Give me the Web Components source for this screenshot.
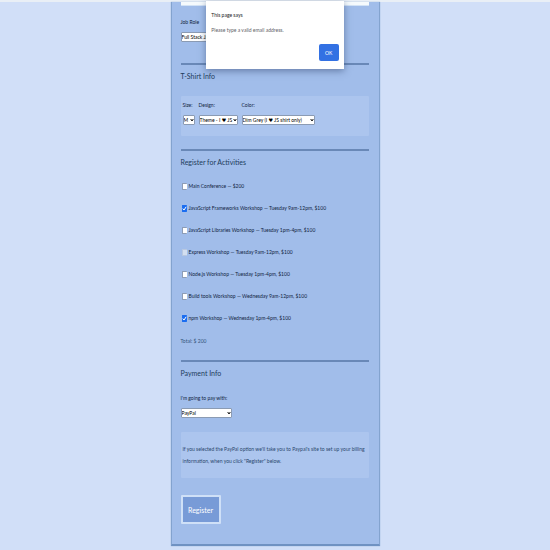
<!DOCTYPE html>
<html lang="en">
<head>
<meta charset="utf-8">
<meta name="viewport" content="width=device-width, initial-scale=1">
<title>Conference registration</title>
<style>
  body { margin: 0; min-height: 100vh; background: #d1dff8; color: #10243f;
    font-family: Lato, "Open Sans", "DejaVu Sans", sans-serif; font-size: 5px; line-height: 12px; }
</style>
</head>
<body>
<register-page></register-page>
<script>
const define = (name, html, setup) => {
  const template = document.createElement('template');
  template.innerHTML = html;
  customElements.define(name, class extends HTMLElement {
    connectedCallback() {
      if (this.shadowRoot) return;
      const root = this.attachShadow({ mode: 'open' });
      root.append(template.content.cloneNode(true));
      if (setup) setup(this, root);
    }
  });
};

define('form-section', `
  <style>
    :host { display: block; }
    :host([ruled]) { border-top: 2px solid #6988b7; }
    h2 { margin: 0; padding: 3px 0 0; font-size: 7px; line-height: 16px; font-weight: 400; color: #1d3c5c; }
  </style>
  <h2></h2><slot></slot>`, (host, root) => {
    const h = root.querySelector('h2');
    if (host.hasAttribute('heading')) h.textContent = host.getAttribute('heading'); else h.remove();
  });

define('select-field', `
  <style>
    :host { display: block; }
    label { display: block; margin-bottom: 4px; }
    .box { display: grid; align-items: center; width: var(--field-width, auto); }
    select { grid-area: 1 / 1; appearance: none; box-sizing: border-box; width: 100%; height: 10px; margin: 0;
      padding: 0 4px 0 0; border: 1px solid #8b9bb3; border-radius: 1px; background: #fff; color: #000;
      font: 5px/8px Lato, "DejaVu Sans", sans-serif; }
    svg { grid-area: 1 / 1; justify-self: end; width: 4px; height: 4px; margin-right: 1px; pointer-events: none; }
  </style>
  <label for="field"></label>
  <span class="box"><select id="field"><option></option></select>
  <svg viewBox="0 0 4 4" fill="none" stroke="#111" stroke-width="1" aria-hidden="true"><path d="M.7 1 2 3 3.3 1"/></svg></span>`,
  (host, root) => {
    root.querySelector('label').textContent = host.getAttribute('label');
    root.querySelector('option').textContent = host.getAttribute('value');
  });

define('activity-option', `
  <style>
    :host { display: block; height: 22px; }
    label { display: flex; align-items: center; gap: 2px; white-space: nowrap; }
    .tick { display: grid; margin-left: 1px; }
    input { grid-area: 1 / 1; appearance: none; box-sizing: border-box; width: 5px; height: 7px; margin: 0;
      border: 1px solid #8d9cb5; border-width: 1px 0 1px 1px; border-radius: 1px; background: #fff; }
    input:checked { border-color: #1b6df0; background: #1b6df0; }
    input:disabled { border-color: #b9c8e0; background: #d3dff0; }
    svg { grid-area: 1 / 1; width: 5px; height: 7px; pointer-events: none; visibility: hidden; }
    input:checked + svg { visibility: visible; }
  </style>
  <label><span class="tick"><input type="checkbox">
  <svg viewBox="0 0 5 7" fill="none" stroke="#fff" stroke-width="1" aria-hidden="true"><path d="M.8 3.6 2 5 4.2 1.8"/></svg></span>
  <span><slot></slot></span></label>`, (host, root) => {
    const box = root.querySelector('input');
    box.checked = host.hasAttribute('checked');
    box.disabled = host.hasAttribute('disabled');
  });

define('tinted-panel', `
  <style>:host { display: block; background: #acc5ee; border-radius: 1px; }</style><slot></slot>`);

define('alert-dialog', `
  <style>
    :host { position: absolute; top: 1px; left: 0; right: 0; width: 25%; margin: 0 auto; }
    dialog { position: static; display: flex; flex-direction: column; box-sizing: border-box; width: 100%; margin: 0; border: 0;
      padding: 8px 5px; background: #fff; box-shadow: 0 2px 7px #283c6480; }
    h1 { margin: 0 0 3px; font-size: 5px; line-height: 12px; font-weight: 400; color: #202124; }
    p { margin: 0 0 8px; color: #5f6368; }
    button { align-self: flex-end; width: 20px; height: 17px; padding: 0; border: 0; border-radius: 2px;
      background: #3371e3; color: #fff; font: 5px/16px Lato, sans-serif; }
  </style>
  <dialog open aria-labelledby="title"><h1 id="title">This page says</h1><p><slot></slot></p><button type="button">OK</button></dialog>`);

define('register-page', `
  <style>
    :host { display: block; border-top: 2px solid #e9eff6; }
    form { box-sizing: border-box; width: 38%; margin: 0 auto; padding: 0 10px 20px 9px; background: #a1bdea;
      border: 1px solid #83a3cf; border-width: 0 1px 2px; border-bottom-color: #6f92c2; box-shadow: 0 0 1px #83a3cf; }
    .email { display: block; box-sizing: border-box; width: 100%; height: 4px; padding: 0; border: 0; border-bottom: 1px solid #d2e2f5; background: #f5fafd; }
    .role { padding-top: 10px; height: 57px; box-sizing: border-box; --field-width: 52px; }
    .shirt { display: flex; gap: 4px; margin: 12px 0 13px; padding: 3px 2px 10px; box-sizing: border-box; height: 40px; }
    .size { --field-width: 12px; } .design { --field-width: 39px; } .color { --field-width: 73px; }
    .list { padding-top: 10px; }
    .total { margin: 0; padding: 1px 0 13px; color: #35557c; }
    .pay { padding-top: 11px; --field-width: 51px; }
    .note { margin-top: 14px; padding: 11px 2px; }
    .note p { margin: 0; color: #2a476d; }
    button { display: block; margin-top: 17px; width: 40px; height: 29px; padding: 0; border: 2px solid #cfe0f7; border-radius: 1px;
      background: #789bd7; color: #fff; font: 7px/24px Lato, "Open Sans", sans-serif; }
  </style>
  <form>
    <input class="email" type="email" aria-label="Email">
    <form-section><select-field class="role" label="Job Role" value="Full Stack JavaScript"></select-field></form-section>
    <form-section ruled heading="T-Shirt Info">
      <tinted-panel class="shirt">
        <select-field class="size" label="Size:" value="M"></select-field>
        <select-field class="design" label="Design:" value="Theme - I ♥ JS"></select-field>
        <select-field class="color" label="Color:" value="Dim Grey (I ♥ JS shirt only)"></select-field>
      </tinted-panel>
    </form-section>
    <form-section ruled heading="Register for Activities">
      <div class="list">
        <activity-option>Main Conference — $200</activity-option>
        <activity-option checked>JavaScript Frameworks Workshop — Tuesday 9am-12pm, $100</activity-option>
        <activity-option>JavaScript Libraries Workshop — Tuesday 1pm-4pm, $100</activity-option>
        <activity-option disabled>Express Workshop — Tuesday 9am-12pm, $100</activity-option>
        <activity-option>Node.js Workshop — Tuesday 1pm-4pm, $100</activity-option>
        <activity-option>Build tools Workshop — Wednesday 9am-12pm, $100</activity-option>
        <activity-option checked>npm Workshop — Wednesday 1pm-4pm, $100</activity-option>
      </div>
      <p class="total">Total: $ 200</p>
    </form-section>
    <form-section ruled heading="Payment Info">
      <select-field class="pay" label="I'm going to pay with:" value="PayPal"></select-field>
      <tinted-panel class="note"><p>If you selected the PayPal option we'll take you to Paypal's site to set up your billing information, when you click "Register" below.</p></tinted-panel>
      <button type="button">Register</button>
    </form-section>
  </form>
  <alert-dialog>Please type a valid email address.</alert-dialog>`);
</script>
</body>
</html>
